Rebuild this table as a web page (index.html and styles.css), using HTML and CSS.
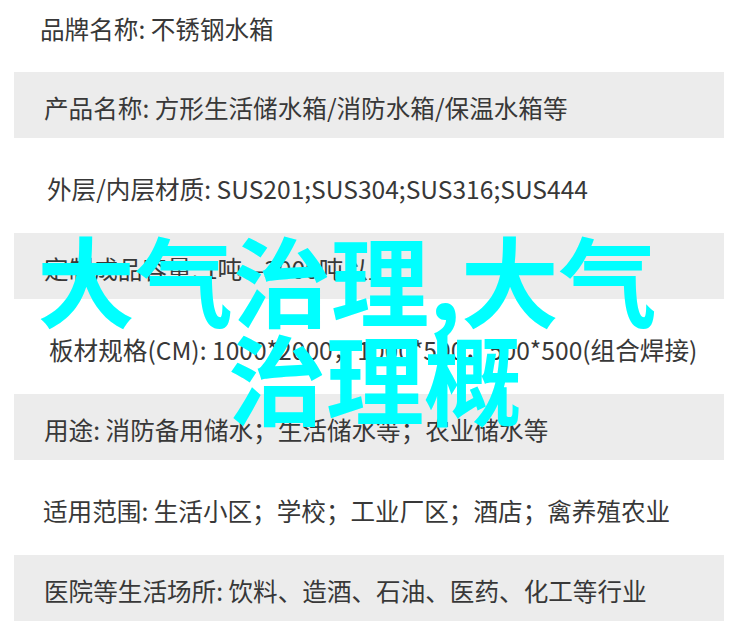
FILE: index.html
```html
<!DOCTYPE html>
<html>
  <head>
    <meta charset="utf-8" />
    <title>不锈钢水箱</title>
    <link rel="stylesheet" href="styles.css">
  </head>
  <body>
    <div class="page">
      <div class="specs">
        <div class="row first">品牌名称: 不锈钢水箱</div>
        <div class="row band">产品名称: 方形生活储水箱/消防水箱/保温水箱等</div>
        <div class="row material">外层/内层材质: SUS201;SUS304;SUS316;SUS444</div>
        <div class="row band">定制成品容量: 1吨—3000吨以上</div>
        <div class="row sizes">板材规格(CM): 1000*2000，1000*500，500*500(组合焊接)</div>
        <div class="row band">用途: 消防备用储水；生活储水等；农业储水等</div>
        <div class="row">适用范围: 生活小区；学校；工业厂区；酒店；禽养殖农业</div>
        <div class="row band">医院等生活场所: 饮料、造酒、石油、医药、化工等行业</div>
      </div>

      <!-- watermark over the list -->
      <div class="watermark">
        <span class="line-one">大气治理,大气</span>
        <span class="line-two">治理概</span>
      </div>
    </div>
  </body>
</html>
```

FILE: styles.css
```css
body {
  margin: 0;
  background-color: #fff;
  font-family: "Noto Sans CJK SC", "Noto Sans", sans-serif;
  color: #383838;
}

.page {
  position: relative;
  width: 750px;
  height: 638px;
  overflow: hidden;
}

.specs {
  padding: 0 26px 0 14px;
}

.row {
  height: 95px;
  box-sizing: border-box;
  padding: 32px 0 0 29px;
  font-size: 24.6px;
  line-height: 36px;
  white-space: nowrap;
}

.row.first {
  height: 72px;
  padding-top: 10px;
  padding-left: 26px;
}

.row.material {
  padding-left: 33px;
}

.row.sizes {
  padding-left: 35px;
}

.row.band {
  height: 66px;
  padding-top: 17px;
  padding-left: 30px;
  background-color: #ececec;
}

.watermark {
  position: absolute;
  top: 228px;
  left: 0;
  width: 750px;
  font-size: 98px;
  line-height: 98px;
  font-weight: 700;
  color: #00ffff;
}

.line-one {
  display: block;
  padding-left: 37px;
  white-space: nowrap;
}

.line-two {
  display: block;
  text-align: center;
}
```
